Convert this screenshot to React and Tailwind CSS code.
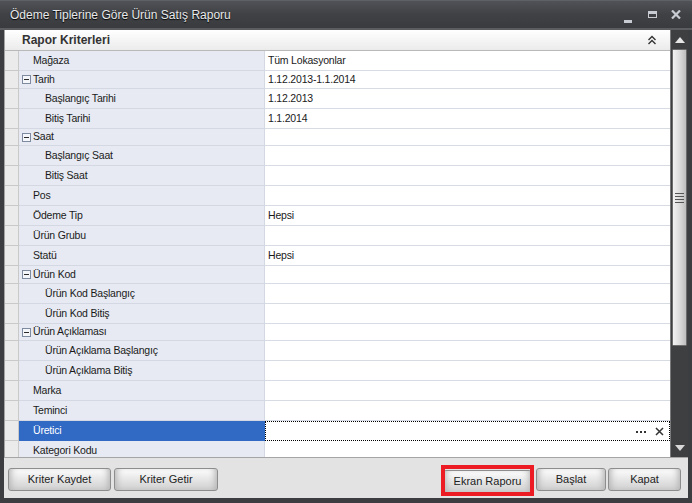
import React from "react";

// Rapor kriter satırları
const rows = [
  { label: "Mağaza", value: "Tüm Lokasyonlar" },
  { label: "Tarih", value: "1.12.2013-1.1.2014", group: true, h: "h-[18px]" },
  { label: "Başlangıç Tarihi", value: "1.12.2013", child: true },
  { label: "Bitiş Tarihi", value: "1.1.2014", child: true },
  { label: "Saat", group: true, h: "h-[17px]" },
  { label: "Başlangıç Saat", child: true },
  { label: "Bitiş Saat", child: true },
  { label: "Pos" },
  { label: "Ödeme Tip", value: "Hepsi" },
  { label: "Ürün Grubu" },
  { label: "Statü", value: "Hepsi" },
  { label: "Ürün Kod", group: true, h: "h-[18px]" },
  { label: "Ürün Kod Başlangıç", child: true },
  { label: "Ürün Kod Bitiş", child: true },
  { label: "Ürün Açıklaması", group: true, h: "h-[17px]" },
  { label: "Ürün Açıklama Başlangıç", child: true },
  { label: "Ürün Açıklama Bitiş", child: true },
  { label: "Marka" },
  { label: "Teminci" },
  { label: "Üretici", selected: true },
  { label: "Kategori Kodu" },
];

const MinusBox = () => (
  <svg width="9" height="9" viewBox="0 0 9 9" className="shrink-0">
    <rect x="0.5" y="0.5" width="8" height="8" fill="#f4f6fa" stroke="#7d8aa0" />
    <line x1="2" y1="4.5" x2="7" y2="4.5" stroke="#2b2b2b" />
  </svg>
);

const TitleBar = () => (
  <div className="h-[28px] flex items-center bg-gradient-to-b from-[#505257] via-[#3f4145] to-[#393b3f] border-t border-[#5e6166]">
    <div className="pl-[10px] flex-1 text-[12px] text-[#e8e9eb] [text-shadow:0_1px_1px_#000]">
      Ödeme Tiplerine Göre Ürün Satış Raporu
    </div>
    <div className="flex pr-[4px]">
      <div className="w-[24px] h-[20px] flex items-end justify-center pb-[2px]">
        <div className="w-[8px] h-[3px] bg-[#c8ccd2]" />
      </div>
      <div className="w-[24px] h-[20px] flex items-center justify-center">
        <div className="w-[9px] h-[7px] border border-t-[3px] border-[#c8ccd2]" />
      </div>
      <div className="w-[24px] h-[20px] flex items-center justify-center">
        <svg width="10" height="9" viewBox="0 0 10 9">
          <path d="M1 0.5 L9 8.5 M9 0.5 L1 8.5" stroke="#c8ccd2" strokeWidth="2.2" />
        </svg>
      </div>
    </div>
  </div>
);

const Row = ({ row }) => {
  const height = row.h || "h-[20px]";
  return (
    <div className={`flex shrink-0 ${height}`}>
      <div className="w-[14px] shrink-0 bg-[#ebebeb] border-r border-b border-[#c9c9c9]" />
      <div
        className={`w-[246px] shrink-0 flex items-center border-r border-b ${
          row.selected
            ? "bg-[#316ac5] text-white border-[#316ac5]"
            : "bg-[#e7eaf2] text-[#1a1a1a] border-[#d3d8e3]"
        } ${row.child ? "pl-[26px]" : row.group ? "pl-[3px]" : "pl-[14px]"}`}
      >
        {row.group && <MinusBox />}
        <span className={row.group ? "ml-[2px]" : ""}>{row.label}</span>
      </div>
      {row.selected ? (
        <div className="flex-1 flex items-center justify-end pr-[5px] bg-white border border-dotted border-black">
          <div className="flex gap-[2px] mr-[9px] mt-[1px]">
            <div className="w-[2px] h-[2px] bg-[#333]" />
            <div className="w-[2px] h-[2px] bg-[#333]" />
            <div className="w-[2px] h-[2px] bg-[#333]" />
          </div>
          <svg width="9" height="9" viewBox="0 0 9 9">
            <path d="M1 1 L8 8 M8 1 L1 8" stroke="#333" strokeWidth="1.5" />
          </svg>
        </div>
      ) : (
        <div className="flex-1 flex items-center pl-[3px] bg-white border-b border-[#d7dbe3] text-[#1a1a1a]">
          {row.value}
        </div>
      )}
    </div>
  );
};

const ScrollBar = () => (
  <div className="w-[18px] shrink-0 flex flex-col bg-[#3e3f41] border-l border-[#7a7a7a]">
    <div className="h-[19px] shrink-0 flex items-center justify-center">
      <svg width="10" height="6" viewBox="0 0 10 6">
        <path d="M0 6 L5 0 L10 6 Z" fill="#e6e6e6" />
      </svg>
    </div>
    <div className="h-[297px] shrink-0 mx-[1px] rounded-[1px] border border-[#6b6b6b] bg-gradient-to-r from-[#f2f2f2] via-[#dcdcdc] to-[#bdbdbd] flex flex-col items-center justify-center gap-[2px]">
      <div className="w-[9px] h-[1px] bg-[#555]" />
      <div className="w-[9px] h-[1px] bg-[#555]" />
      <div className="w-[9px] h-[1px] bg-[#555]" />
      <div className="w-[9px] h-[1px] bg-[#555]" />
    </div>
    <div className="flex-1" />
    <div className="h-[19px] shrink-0 flex items-center justify-center">
      <svg width="10" height="6" viewBox="0 0 10 6">
        <path d="M0 0 L10 0 L5 6 Z" fill="#d8d8d8" />
      </svg>
    </div>
  </div>
);

const Button = ({ text, w }) => (
  <button
    className={`${w} h-[23px] shrink-0 rounded-[3px] border border-[#8d8d8d] bg-gradient-to-b from-[#fdfdfd] via-[#e6e6e6] to-[#cfcfcf] shadow-[inset_6px_0_6px_-4px_#b5b5b5,inset_-6px_0_6px_-4px_#b5b5b5] text-[11px] text-[#222]`}
  >
    {text}
  </button>
);

const App = () => {
  return (
    <div className="w-[692px] h-[503px] flex flex-col overflow-hidden bg-[#3b3d41] font-['Liberation_Sans',Arial,sans-serif]">
      <TitleBar />
      <div className="h-[2px] shrink-0 bg-[#5b5d61]" />
      <div className="flex-1 flex flex-col pl-[4px] pr-[4px] pb-[5px]">
        <div className="h-[427px] shrink-0 flex border-l border-[#a3a3a3] bg-white">
          <div className="flex-1 flex flex-col overflow-hidden text-[10.5px] tracking-[-0.2px]">
            <div className="h-[21px] shrink-0 flex items-center justify-between pl-[17px] pr-[13px] bg-gradient-to-b from-[#ffffff] to-[#ebebeb] border-b border-[#b9b9b9]">
              <span className="text-[12px] font-bold text-[#333] tracking-normal">Rapor Kriterleri</span>
              <svg width="10" height="10" viewBox="0 0 10 10">
                <path d="M1.5 5 L5 1.5 L8.5 5 M1.5 9 L5 5.5 L8.5 9" stroke="#333" strokeWidth="1.4" fill="none" />
              </svg>
            </div>
            {rows.map((row) => (
              <Row key={row.label} row={row} />
            ))}
          </div>
          <ScrollBar />
        </div>
        <div className="flex-1 flex items-start pt-[10px] pl-[4px] pr-[7px] bg-[#e3e3e3] border-t border-[#a5a5a5]">
          <div className="flex gap-[3px]">
            <Button text="Kriter Kaydet" w="w-[103px]" />
            <Button text="Kriter Getir" w="w-[104px]" />
          </div>
          <div className="flex-1" />
          <div className="relative">
            <Button text="Ekran Raporu" w="w-[89px]" />
            <div className="absolute -left-[2px] -right-[2px] -top-[3px] -bottom-[3px] border-4 border-[#ed1c24] pointer-events-none" />
          </div>
          <div className="flex gap-[2px] ml-[4px]">
            <Button text="Başlat" w="w-[70px]" />
            <Button text="Kapat" w="w-[73px]" />
          </div>
        </div>
      </div>
    </div>
  );
};

export default App;
